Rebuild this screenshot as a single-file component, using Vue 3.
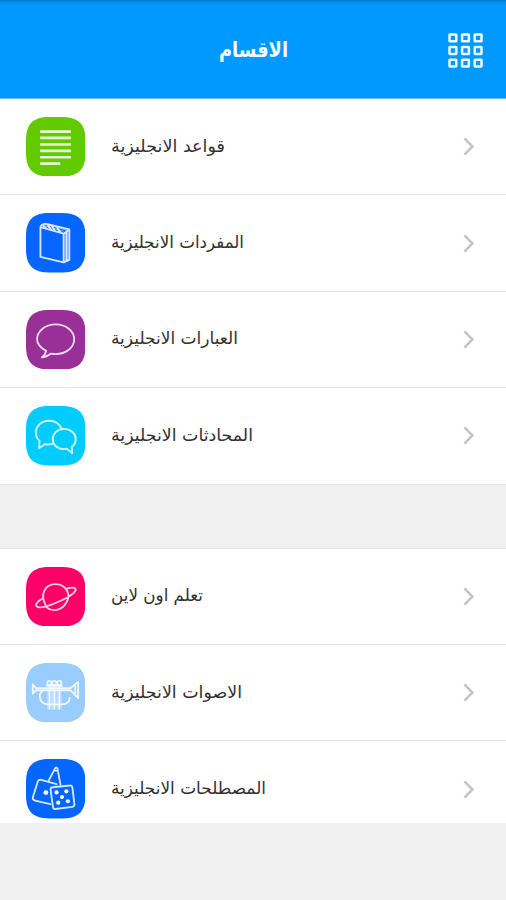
<script setup>
const groups = [
  [
    { label: 'قواعد الانجليزية', icon: 'lines', color: '#62cb00', w: 114 },
    { label: 'المفردات الانجليزية', icon: 'book', color: '#0566ff', w: 133 },
    { label: 'العبارات الانجليزية', icon: 'bubble', color: '#983098', w: 127 },
    { label: 'المحادثات الانجليزية', icon: 'chat', color: '#00ccff', w: 142 },
  ],
  [
    { label: 'تعلم اون لاين', icon: 'planet', color: '#ff0068', w: 92 },
    { label: 'الاصوات الانجليزية', icon: 'trumpet', color: '#99ccff', w: 131 },
    { label: 'المصطلحات الانجليزية', icon: 'dice', color: '#0566ff', w: 155 },
  ],
]
const steps = [1.5, 14.1, 26.7]
</script>

<template>
  <div class="screen">
    <header class="bar">
      <span></span>
      <svg class="title" width="69" height="40">
        <text direction="rtl" x="69" y="26" textLength="69" lengthAdjust="spacingAndGlyphs">الاقسام</text>
      </svg>
      <svg class="grid" viewBox="0 0 36 36">
        <template v-for="y in steps" :key="y">
          <rect v-for="x in steps" :key="x" :x="x" :y="y" width="6.8" height="6.8" rx=".4" />
        </template>
      </svg>
    </header>
    <main class="content">
      <section v-for="(group, g) in groups" :key="g" class="group" :class="{ last: g === 1 }">
        <div v-for="item in group" :key="item.icon" class="row">
          <svg class="tile" viewBox="0 0 59 59">
            <path :fill="item.color" d="M23 0H36C52 0 59 7 59 23V36C59 52 52 59 36 59H23C7 59 0 52 0 36V23C0 7 7 0 23 0Z" />
            <g class="ink">
              <path v-if="item.icon === 'lines'" class="heavy" d="M14 14.5H44.5M14 20.8H44.5M14 27.1H44.5M14 33.5H44.5M14 39.9H44.5M14 46.2H34" />
              <g v-else-if="item.icon === 'book'">
                <path d="M14.3 14L37.3 20.5V49L14.3 43.5ZM14.3 14C15 11.5 18 10.5 21.5 11L43 16.3V46.5L37.3 49M37.3 20.5L43 16.3M40.2 19V47.5M17.5 13L20.5 15.5M21.5 12L25 16.5M26 13.5L29 18M31 15L34 19" />
                <path class="faint" d="M38.8 20V48M41.5 18V47M18 12.5L37 18M22 11.8L41 17" />
              </g>
              <path v-else-if="item.icon === 'bubble'" d="M20 40.5C14.5 37.5 11 33.5 11 29C11 20.8 19.2 14.3 29.4 14.3S47.8 20.8 47.8 29S39.6 43.7 29.4 43.7C28 43.7 26.3 43.5 24.8 43.2C22 45.5 19 47 15.7 47C18.3 45 19.6 43 20 40.5Z" />
              <path v-else-if="item.icon === 'chat'" d="M26.7 37.4C24 38.3 21.3 38.4 18.8 37.7L13 41.8L13.5 34.6C11 32.3 9.8 29.5 9.8 26.2C9.8 19.7 15.5 14.6 22.8 14.6C28.8 14.6 33.8 18 35.4 22.7M37.7 22.7C44 22.7 49.3 27 49.3 32.7C49.3 36 47.8 38.7 45.4 40.6L45.8 46.7L40.5 42.4C33.2 44 26.5 39.5 26.5 32.9C26.5 27 31.3 22.7 37.7 22.7Z" />
              <path v-else-if="item.icon === 'planet'" d="M19.4 37.6C13.5 27 19 17 29.3 17C39.5 17 45.3 27 40 35.2C35.5 43.5 26 44.8 20.5 40M17 31C11.7 33.6 9 37 10.4 38.8C13 42.2 25.5 37.8 35.5 33C45 28.4 51.8 23.2 48.5 21.1C47 20.2 44 20.5 40.5 21.5" />
              <g v-else-if="item.icon === 'trumpet'">
                <path d="M6.7 21.5V30.3L10 27H44L51.7 34.8V18.7L44 25H10L6.7 21.5M48.8 22V31M17.5 27C13.8 29 13.3 32 13.7 34C14.5 38 17.5 41 22 41H36C40.5 41 43.3 38 43.3 34.5M23.3 22.5V45.5M28.1 22.5V45.5M33 22.5V45.5M20.8 22.3H35.5" />
                <path class="faint" d="M21.7 23V45.5M25 23V45.5M26.4 23V45.5M29.7 23V45.5M31.3 23V45.5M34.6 23V45.5" />
                <circle cx="23.3" cy="19.8" r="2.1" /><circle cx="28.1" cy="19.8" r="2.1" /><circle cx="33" cy="19.8" r="2.1" />
              </g>
              <g v-else>
                <path d="M24.2 44.8L9 41.2Q6.2 40.5 6.8 38L11.7 22.4Q12.5 20.2 15 20.7L30.3 25M22.2 22L28.7 9.5Q30 7 31.2 9.5L34.2 25.4M29 11.5H31.2" />
                <path d="M26.5 28L43.5 26.3Q45.7 26 46 28.3L48 44.8Q48.2 47 46 47.4L29.2 49.6Q27 49.8 26.7 47.5L24.4 30.5Q24.2 28.3 26.5 28Z" />
                <g class="dots"><circle cx="19.7" cy="33.3" r="2.4" /><circle cx="30.3" cy="33.2" r="2.1" /><circle cx="40" cy="32" r="2.1" /><circle cx="35.7" cy="37.7" r="2.1" /><circle cx="32" cy="43.3" r="2.1" /><circle cx="41.5" cy="42" r="2.1" /></g>
              </g>
            </g>
          </svg>
          <svg class="label" :width="item.w" height="40">
            <text direction="rtl" :x="item.w" y="25" :textLength="item.w" lengthAdjust="spacingAndGlyphs">{{ item.label }}</text>
          </svg>
          <svg class="chevron" viewBox="0 0 12 20"><path d="M1.5 1.5L10 10L1.5 18.5" /></svg>
        </div>
      </section>
    </main>
  </div>
</template>

<style>
body { margin: 0; background: #f0f0f0; }
</style>

<style scoped>
.screen { height: 900px; overflow: hidden; background: #f0f0f0; font-family: "DejaVu Sans", sans-serif; }
.bar {
  height: 99px; box-sizing: border-box; padding: 3px 22.5px 0; display: grid;
  grid-template-columns: 36px 1fr 36px; align-items: center;
  background: linear-gradient(#0077c8, #0092f3 3px, #0099ff 6px);
  border-bottom: 1px solid #65bcfb;
}
.title { justify-self: center; overflow: visible; }
.title text { font-size: 21px; font-weight: 700; fill: #f4fbff; }
.grid { width: 36px; height: 36px; fill: none; stroke: #eef8ff; stroke-width: 2.5; }
.content { height: 724px; overflow: hidden; }
.group { background: #fff; }
.group.last { margin-top: 63px; border-top: 1px solid #e4e4e4; }
.row {
  height: 96.4px; box-sizing: border-box; padding: 0 32px 0 25.5px;
  border-bottom: 1.5px solid #e6e6e6; display: flex; align-items: center;
}
.tile { width: 59.5px; height: 59.5px; flex: none; }
.ink { fill: none; stroke: #fff; stroke-opacity: .84; stroke-width: 1.8; stroke-linejoin: round; stroke-linecap: round; }
.heavy { stroke-width: 2.7; stroke-linecap: butt; }
.faint { stroke-opacity: .45; stroke-width: 1; }
.dots { fill: #fff; stroke: none; }
.label { margin-left: 26px; overflow: visible; flex: none; }
.label text { font-size: 17px; fill: #303030; }
.chevron { width: 11.4px; height: 19px; margin-left: auto; fill: none; stroke: #c4c4c4; stroke-width: 2.7; }
</style>
